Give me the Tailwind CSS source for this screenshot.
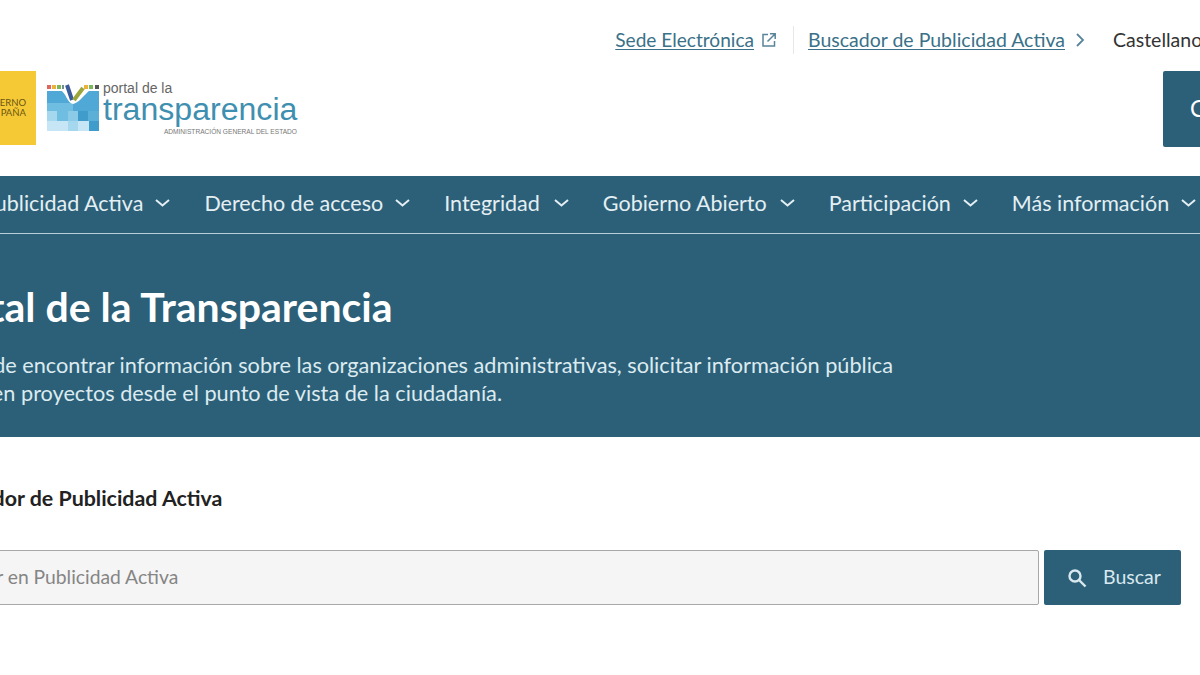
<!DOCTYPE html>
<html lang="es">
<head>
  <meta charset="UTF-8"/>
  <title>Portal de la Transparencia</title>
  <script src="https://cdn.jsdelivr.net/npm/@tailwindcss/browser@4"></script>
</head>
<body class="bg-white h-[675px] overflow-hidden font-['Lato',sans-serif] text-[#333]">
  <!-- Top links -->
  <div class="h-[71px] pt-[26px] flex justify-end items-start whitespace-nowrap -mr-[40px]">
    <div class="flex items-center h-[28px] text-[19.5px]">
      <a class="text-[#3a7188] underline underline-offset-2 text-[19.1px]">Sede Electrónica</a>
      <svg class="w-[16px] h-[16px] ml-[7px]" viewBox="0 0 16 16" fill="none" stroke="#5a8499" stroke-width="1.5"><path d="M7 2.5H2v11.5h11.5V9M6.5 9.5 14 2M9 1.8h5.2V7"/></svg>
      <div class="w-px h-[28px] bg-gray-200 ml-[16px] mr-[14px]"></div>
      <a class="text-[#3a7188] underline underline-offset-2">Buscador de Publicidad Activa</a>
      <svg class="w-[10px] h-[14px] ml-[10px]" viewBox="0 0 10 14" fill="none" stroke="#5a8499" stroke-width="1.8"><path d="m2 1 6 6-6 6"/></svg>
      <span class="ml-[28px] w-[127px]">Castellano</span>
    </div>
  </div>

  <!-- Logos -->
  <div class="h-[105px] flex items-start justify-between">
    <div class="flex items-start">
      <div class="w-[36px] h-[74px] bg-[#f5c936] flex flex-col justify-center items-end pr-[10px] overflow-hidden text-[9.5px] leading-[10px] text-[#6b5512] whitespace-nowrap">
        <span>ERNO</span>
        <span>PAÑA</span>
      </div>
      <svg class="w-[53px] h-[48px] ml-[11px] mt-[13px]" viewBox="0 0 53 48">
        <rect x="0" y="1" width="4" height="4" fill="#e0655a"/><rect x="5" y="1" width="4" height="4" fill="#e8b23c"/><rect x="10" y="1" width="4" height="4" fill="#7cb85a"/><rect x="15" y="1" width="2" height="4" fill="#6f8f8a"/><rect x="37" y="1" width="4" height="4" fill="#e8b23c"/><rect x="42" y="1" width="4" height="4" fill="#7cb85a"/><rect x="48" y="1" width="4" height="4" fill="#555"/>
        <rect x="0" y="7" width="52" height="12" fill="#4fa8d5"/>
        <rect x="0" y="19" width="26" height="8" fill="#6fbde0"/><rect x="26" y="19" width="26" height="8" fill="#4fa8d5"/>
        <rect x="0" y="27" width="10" height="10" fill="#a5d7ee"/><rect x="10" y="27" width="11" height="10" fill="#6fbde0"/><rect x="21" y="27" width="10" height="10" fill="#8ccbe8"/><rect x="31" y="27" width="10" height="10" fill="#3f9ccb"/><rect x="41" y="27" width="11" height="10" fill="#5cb0d8"/>
        <rect x="0" y="37" width="21" height="10" fill="#c6e6f5"/><rect x="21" y="37" width="10" height="10" fill="#a5d7ee"/><rect x="31" y="37" width="11" height="10" fill="#c6e6f5"/><rect x="42" y="37" width="10" height="10" fill="#3f9ccb"/>
        <path d="M13 6C19 8 20 19 26 20 32 19 37 11 43 6Z" fill="#fff"/>
        <path d="M20 1 25 16" fill="none" stroke="#3a5a9a" stroke-width="4"/>
        <path d="M27 16 36 4" fill="none" stroke="#9aa63c" stroke-width="4"/>
      </svg>
      <div class="ml-[3px] mt-[9px] w-[200px] h-[60px] font-['Liberation_Sans',sans-serif]">
        <div class="text-[14px] leading-[16px] text-[#666]">portal de la</div>
        <div class="text-[32.1px] leading-[32px] -mt-[3px] text-[#3f8fb0]">transparencia</div>
        <div class="text-[6.6px] leading-[7px] text-[#777] text-right pr-[6px] mt-[3px] whitespace-nowrap">ADMINISTRACIÓN GENERAL DEL ESTADO</div>
      </div>
    </div>
    <div class="w-[37px] h-[76px] bg-[#2c6079] text-white text-[23px] leading-[74px] pl-[27px] overflow-hidden rounded-l-[2px]">C</div>
  </div>

  <!-- Nav -->
  <nav class="h-[58px] bg-[#2c6079] text-[#e4eff3] border-b border-[#b9d0da] flex items-center text-[21.5px] whitespace-nowrap pb-[3px]">
    <div class="flex items-center -ml-[18px]">
      <span>Publicidad Activa</span>
      <svg class="w-[15px] h-[8px] ml-[12px] mr-[34px]" viewBox="0 0 15 8" fill="none" stroke="currentColor" stroke-width="2"><path d="m1 1 6.5 5.5L14 1"/></svg>
      <span>Derecho de acceso</span>
      <svg class="w-[15px] h-[8px] ml-[12px] mr-[34px]" viewBox="0 0 15 8" fill="none" stroke="currentColor" stroke-width="2"><path d="m1 1 6.5 5.5L14 1"/></svg>
      <span>Integridad</span>
      <svg class="w-[15px] h-[8px] ml-[14px] mr-[34px]" viewBox="0 0 15 8" fill="none" stroke="currentColor" stroke-width="2"><path d="m1 1 6.5 5.5L14 1"/></svg>
      <span>Gobierno Abierto</span>
      <svg class="w-[15px] h-[8px] ml-[13px] mr-[34px]" viewBox="0 0 15 8" fill="none" stroke="currentColor" stroke-width="2"><path d="m1 1 6.5 5.5L14 1"/></svg>
      <span>Participación</span>
      <svg class="w-[15px] h-[8px] ml-[12px] mr-[34px]" viewBox="0 0 15 8" fill="none" stroke="currentColor" stroke-width="2"><path d="m1 1 6.5 5.5L14 1"/></svg>
      <span>Más información</span>
      <svg class="w-[15px] h-[8px] ml-[12px]" viewBox="0 0 15 8" fill="none" stroke="currentColor" stroke-width="2"><path d="m1 1 6.5 5.5L14 1"/></svg>
    </div>
  </nav>

  <!-- Hero -->
  <section class="h-[203px] bg-[#2c6079] text-white whitespace-nowrap pt-[47px]">
    <h1 class="text-[41px] leading-[52px] font-bold -ml-[74px]">Portal de la Transparencia</h1>
    <p class="mt-[18px] text-[21.7px] leading-[28px] text-[#dcebf0] -ml-[92px]">Aquí puede encontrar información sobre las organizaciones administrativas, solicitar información pública</p>
    <p class="text-[21.7px] leading-[28px] text-[#dcebf0] -ml-[120px]">y participar en proyectos desde el punto de vista de la ciudadanía.</p>
  </section>

  <!-- Search -->
  <section class="pt-[47px] whitespace-nowrap">
    <h2 class="text-[21.4px] leading-[28px] font-bold text-[#222] -ml-[64px]">Buscador de Publicidad Activa</h2>
    <div class="mt-[38px] flex items-stretch h-[55px] -ml-[40px] pr-[19px]">
      <div class="flex-1 bg-[#f5f5f5] border border-[#a8a8a8] rounded-[2px] flex items-center text-[19.3px] text-[#858585]">
        <span class="-ml-[15px]">Buscar en Publicidad Activa</span>
      </div>
      <button class="w-[137px] ml-[5px] bg-[#2c6079] text-[#d9e8ee] rounded-[2px] flex items-center text-[19.5px] pl-[23px] pb-[2px]">
        <svg class="w-[20px] h-[20px] mr-[16px] mt-[2px]" viewBox="0 0 20 20" fill="none" stroke="currentColor" stroke-width="2.4"><circle cx="8" cy="8" r="5.5"/><path d="m12 12 6.5 6.5"/></svg>
        Buscar
      </button>
    </div>
  </section>
</body>
</html>
